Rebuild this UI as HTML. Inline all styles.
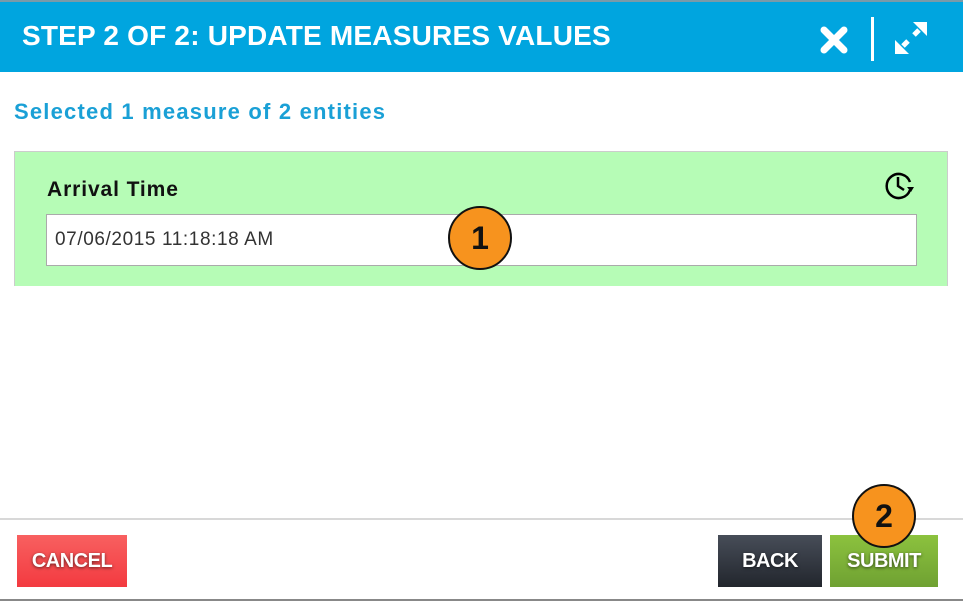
<!DOCTYPE html>
<html><head><meta charset="utf-8"><style>
*{margin:0;padding:0;box-sizing:border-box}
body{width:963px;height:601px;background:#fff;font-family:"Liberation Sans",sans-serif;position:relative;overflow:hidden}
.hdr{position:absolute;left:0;top:0;width:963px;height:72px;background:#00a5df;border-top:2px solid #7a9aa8}
.hdr h1{position:absolute;left:22px;top:18px;color:#fff;font-size:28px;font-weight:bold;letter-spacing:0.2px}
.sep{position:absolute;left:871px;top:15px;width:3px;height:44px;background:#fff}
.sub{position:absolute;left:14px;top:99px;color:#1aa0d6;font-size:22px;font-weight:bold;letter-spacing:1.2px}
.box{position:absolute;left:14px;top:151px;width:934px;height:135px;background:#b6fcb6;border:1px solid #ccc;border-bottom:none}
.lbl{position:absolute;left:32px;top:26px;font-size:21px;font-weight:bold;color:#111;letter-spacing:0.9px}
.inp{position:absolute;left:31px;top:62px;width:871px;height:52px;background:#fff;border:1px solid #aaa;font-size:19px;color:#333;padding:14px 0 0 8px;letter-spacing:0.6px}
.badge{position:absolute;width:64px;height:64px;border-radius:50%;background:#f7931e;border:2px solid #111;font-size:32px;font-weight:bold;text-align:center;line-height:60px;color:#111}
.line{position:absolute;left:0;top:518px;width:963px;height:2px;background:#d8d8d8}
.bot{position:absolute;left:0;top:599px;width:963px;height:2px;background:#888}
.btn{position:absolute;top:535px;height:52px;color:#fff;font-size:20px;font-weight:bold;text-align:center;line-height:52px;text-shadow:0 1px 3px rgba(0,0,0,.6);letter-spacing:-0.5px}
</style></head><body>
<div class="hdr"><h1>STEP 2 OF 2: UPDATE MEASURES VALUES</h1>
<svg style="position:absolute;left:820px;top:24px" width="28" height="28" viewBox="0 0 28 28"><path d="M4 4L24 24M24 4L4 24" stroke="#fff" stroke-width="7" stroke-linecap="round"/></svg>
<div class="sep"></div>
<svg style="position:absolute;left:894px;top:19px" width="34" height="34" viewBox="0 0 34 34"><path d="M20 14L25 9" stroke="#fff" stroke-width="5"/><path d="M14 20L9 25" stroke="#fff" stroke-width="5"/><path d="M19 1H33V15Z M1 19V33H15Z" fill="#fff"/></svg>
</div>
<div class="sub">Selected 1 measure of 2 entities</div>
<div class="box"><div class="lbl">Arrival Time</div>
<svg style="position:absolute;left:868px;top:18px" width="34" height="30" viewBox="0 0 34 30"><path d="M27 20A12 12 0 1 1 27 12" fill="none" stroke="#000" stroke-width="2.5"/><path d="M24 17L31 17L28 22Z" fill="#000"/><path d="M15 7V16L21 20" fill="none" stroke="#000" stroke-width="2.5"/></svg>
<div class="inp">07/06/2015 11:18:18 AM</div></div>
<div class="badge" style="left:448px;top:206px">1</div>
<div class="line"></div>
<div class="btn" style="left:17px;width:110px;background:linear-gradient(#f86060,#f33a40)">CANCEL</div>
<div class="btn" style="left:718px;width:104px;background:linear-gradient(#474d58,#22262d)">BACK</div>
<div class="btn" style="left:830px;width:108px;background:linear-gradient(#8cc23e,#6fa132)">SUBMIT</div>
<div class="badge" style="left:852px;top:484px">2</div>
<div class="bot"></div>
</body></html>
